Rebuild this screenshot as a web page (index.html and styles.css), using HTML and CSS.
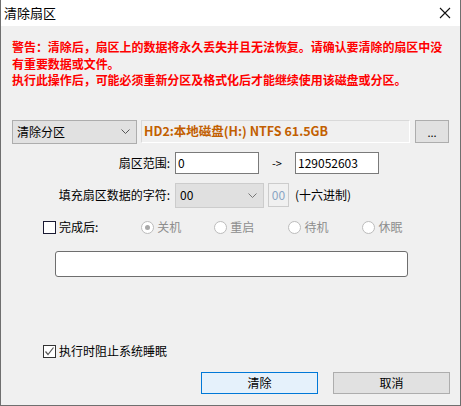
FILE: index.html
```html
<!DOCTYPE html>
<html>
    <head>
        <meta charset="utf-8">
        <link rel="stylesheet" href="styles.css">
    </head>
    <body>
        <div class="window">
            <div class="titlebar">
                <span class="title">清除扇区</span>
                <svg class="close" width="12" height="12" viewBox="0 0 12 12">
                    <path d="M1 1 L11 11 M11 1 L1 11" stroke="#111" stroke-width="1.1" fill="none"/>
                </svg>
            </div>
            <div class="content">
                <p class="warning">
                    警告：清除后，扇区上的数据将永久丢失并且无法恢复。请确认要清除的扇区中没有重要数据或文件。<br>
                    执行此操作后，可能必须重新分区及格式化后才能继续使用该磁盘或分区。
                </p>

                <div class="row row-target">
                    <div class="combo combo-mode">
                        <span>清除分区</span>
                        <svg class="chev" width="9" height="5" viewBox="0 0 9 5"><polyline points="0.5,0.5 4.5,4.5 8.5,0.5" fill="none" stroke="#555"/></svg>
                    </div>
                    <div class="target">HD2:本地磁盘(H:) NTFS 61.5GB</div>
                    <button class="btn btn-browse">...</button>
                </div>

                <div class="row row-range">
                    <label class="field-label">扇区范围:</label>
                    <input class="edit" type="text" value="0">
                    <span class="arrow">-&gt;</span>
                    <input class="edit" type="text" value="129052603">
                </div>

                <div class="row row-fill">
                    <label class="field-label">填充扇区数据的字符:</label>
                    <div class="combo combo-fill">
                        <span>00</span>
                        <svg class="chev" width="9" height="5" viewBox="0 0 9 5"><polyline points="0.5,0.5 4.5,4.5 8.5,0.5" fill="none" stroke="#777"/></svg>
                    </div>
                    <div class="hexbox">00</div>
                    <span class="hint">(十六进制)</span>
                </div>

                <div class="row row-after">
                    <span class="check"></span>
                    <span class="check-label">完成后:</span>
                    <div class="radios">
                        <span class="radio-item radio-1"><span class="radio checked"></span>关机</span>
                        <span class="radio-item radio-2"><span class="radio"></span>重启</span>
                        <span class="radio-item radio-3"><span class="radio"></span>待机</span>
                        <span class="radio-item radio-4"><span class="radio"></span>休眠</span>
                    </div>
                </div>

                <div class="status-box"></div>

                <div class="row row-sleep">
                    <span class="check check-on">
                        <svg width="11" height="11" viewBox="0 0 11 11"><polyline points="1.5,5.5 4,8.5 9.5,1.5" fill="none" stroke="#555" stroke-width="1.2"/></svg>
                    </span>
                    <span class="check-label">执行时阻止系统睡眠</span>
                </div>

                <div class="row row-buttons">
                    <button class="btn btn-default">清除</button>
                    <button class="btn">取消</button>
                </div>
            </div>
        </div>
    </body>
</html>
```

FILE: styles.css
```css
body {
    margin: 0;
    font-family: "Noto Sans CJK SC", "Noto Sans", sans-serif;
    font-size: 12px;
    color: #000;
}
.window {
    width: 461px;
    height: 406px;
    box-sizing: border-box;
    border: 1px solid #6f6f6f;
    border-top: none;
    display: flex;
    flex-direction: column;
    background-color: #f0f0f0;
}
.titlebar {
    height: 26px;
    flex: none;
    background-color: white;
    display: flex;
    align-items: center;
    justify-content: space-between;
    padding: 0 9px 0 3px;
}
.title {
    font-size: 13px;
    line-height: 16px;
}
.content {
    flex: 1;
    padding: 13px 10px 0 11px;
}
.warning {
    margin: 0;
    color: #ff0000;
    font-weight: bold;
    font-size: 12px;
    line-height: 16.5px;
    letter-spacing: -0.05px;
}
.row {
    display: flex;
    align-items: center;
}
.row-target {
    margin-top: 31px;
    height: 24px;
}
.combo {
    box-sizing: border-box;
    height: 100%;
    border: 1px solid #adadad;
    background-color: #e1e1e1;
    display: flex;
    align-items: center;
    justify-content: space-between;
    padding: 0 6px 0 4px;
    line-height: 14px;
}
.combo-mode {
    width: 125px;
    font-size: 12px;
}
.target {
    box-sizing: border-box;
    width: 269px;
    height: 23px;
    margin-left: 4px;
    border: 1px solid #d9d9d9;
    border-right-color: #fff;
    border-bottom-color: #fff;
    padding-left: 2px;
    color: #c25f00;
    font-weight: bold;
    font-size: 12.5px;
    line-height: 20px;
}
.btn {
    box-sizing: border-box;
    font-family: inherit;
    font-size: 12px;
    background-color: #e1e1e1;
    border: 1px solid #adadad;
    padding: 0;
    color: #000;
}
.btn-browse {
    width: 34px;
    height: 23px;
    margin-left: 5px;
    font-size: 11px;
}
.field-label {
    width: 158px;
    text-align: right;
    margin-right: 5px;
    line-height: 14px;
}
.row-range {
    margin-top: 8px;
    height: 22px;
}
.edit {
    box-sizing: border-box;
    width: 84px;
    height: 22px;
    margin: 0;
    border: 1px solid #7a7a7a;
    background-color: white;
    font-family: inherit;
    font-size: 12px;
    padding: 0 2px;
    outline: none;
}
.arrow {
    width: 36px;
    text-align: center;
    font-size: 11px;
}
.row-fill {
    margin-top: 9px;
    height: 25px;
}
.combo-fill {
    width: 89px;
    border-color: #cccccc;
    background-color: #e0e0e0;
    padding-left: 4px;
}
.hexbox {
    box-sizing: border-box;
    width: 21px;
    height: 24px;
    margin-left: 4px;
    border: 1px solid #cccccc;
    color: #8aa6c4;
    text-align: center;
    line-height: 22px;
}
.hint {
    margin-left: 6px;
    line-height: 14px;
}
.row-after {
    margin-top: 12px;
    height: 15px;
    padding-left: 31px;
}
.check {
    box-sizing: border-box;
    width: 13px;
    height: 13px;
    border: 1px solid #1a1a33;
    background-color: white;
    display: flex;
    align-items: center;
    justify-content: center;
}
.check-on {
    border-color: #333;
}
.check-label {
    margin-left: 3px;
    line-height: 14px;
}
.radios {
    display: flex;
    margin-left: 43px;
    color: #8d8d8d;
}
.radio-item {
    display: flex;
    align-items: center;
    line-height: 14px;
}
.radio-2 { margin-left: 33px; }
.radio-3 { margin-left: 34px; }
.radio-4 { margin-left: 34px; }
.radio {
    box-sizing: border-box;
    width: 13px;
    height: 13px;
    border: 1px solid #bcbcbc;
    border-radius: 50%;
    background-color: white;
    margin-right: 3px;
    display: flex;
    align-items: center;
    justify-content: center;
}
.radio.checked::after {
    content: "";
    width: 5px;
    height: 5px;
    border-radius: 50%;
    background-color: #a8a8a8;
}
.status-box {
    box-sizing: border-box;
    width: 353px;
    height: 26px;
    margin: 16px 0 0 43px;
    border: 1px solid #6e6e6e;
    border-radius: 3px;
    background-color: white;
}
.row-sleep {
    margin-top: 68px;
    height: 13px;
    padding-left: 31px;
}
.row-buttons {
    margin-top: 14px;
    justify-content: flex-end;
    gap: 15px;
}
.row-buttons .btn {
    width: 117px;
    height: 22px;
}
.btn-default {
    border-color: #0078d7;
    background-color: #e5f1fb;
}
```
